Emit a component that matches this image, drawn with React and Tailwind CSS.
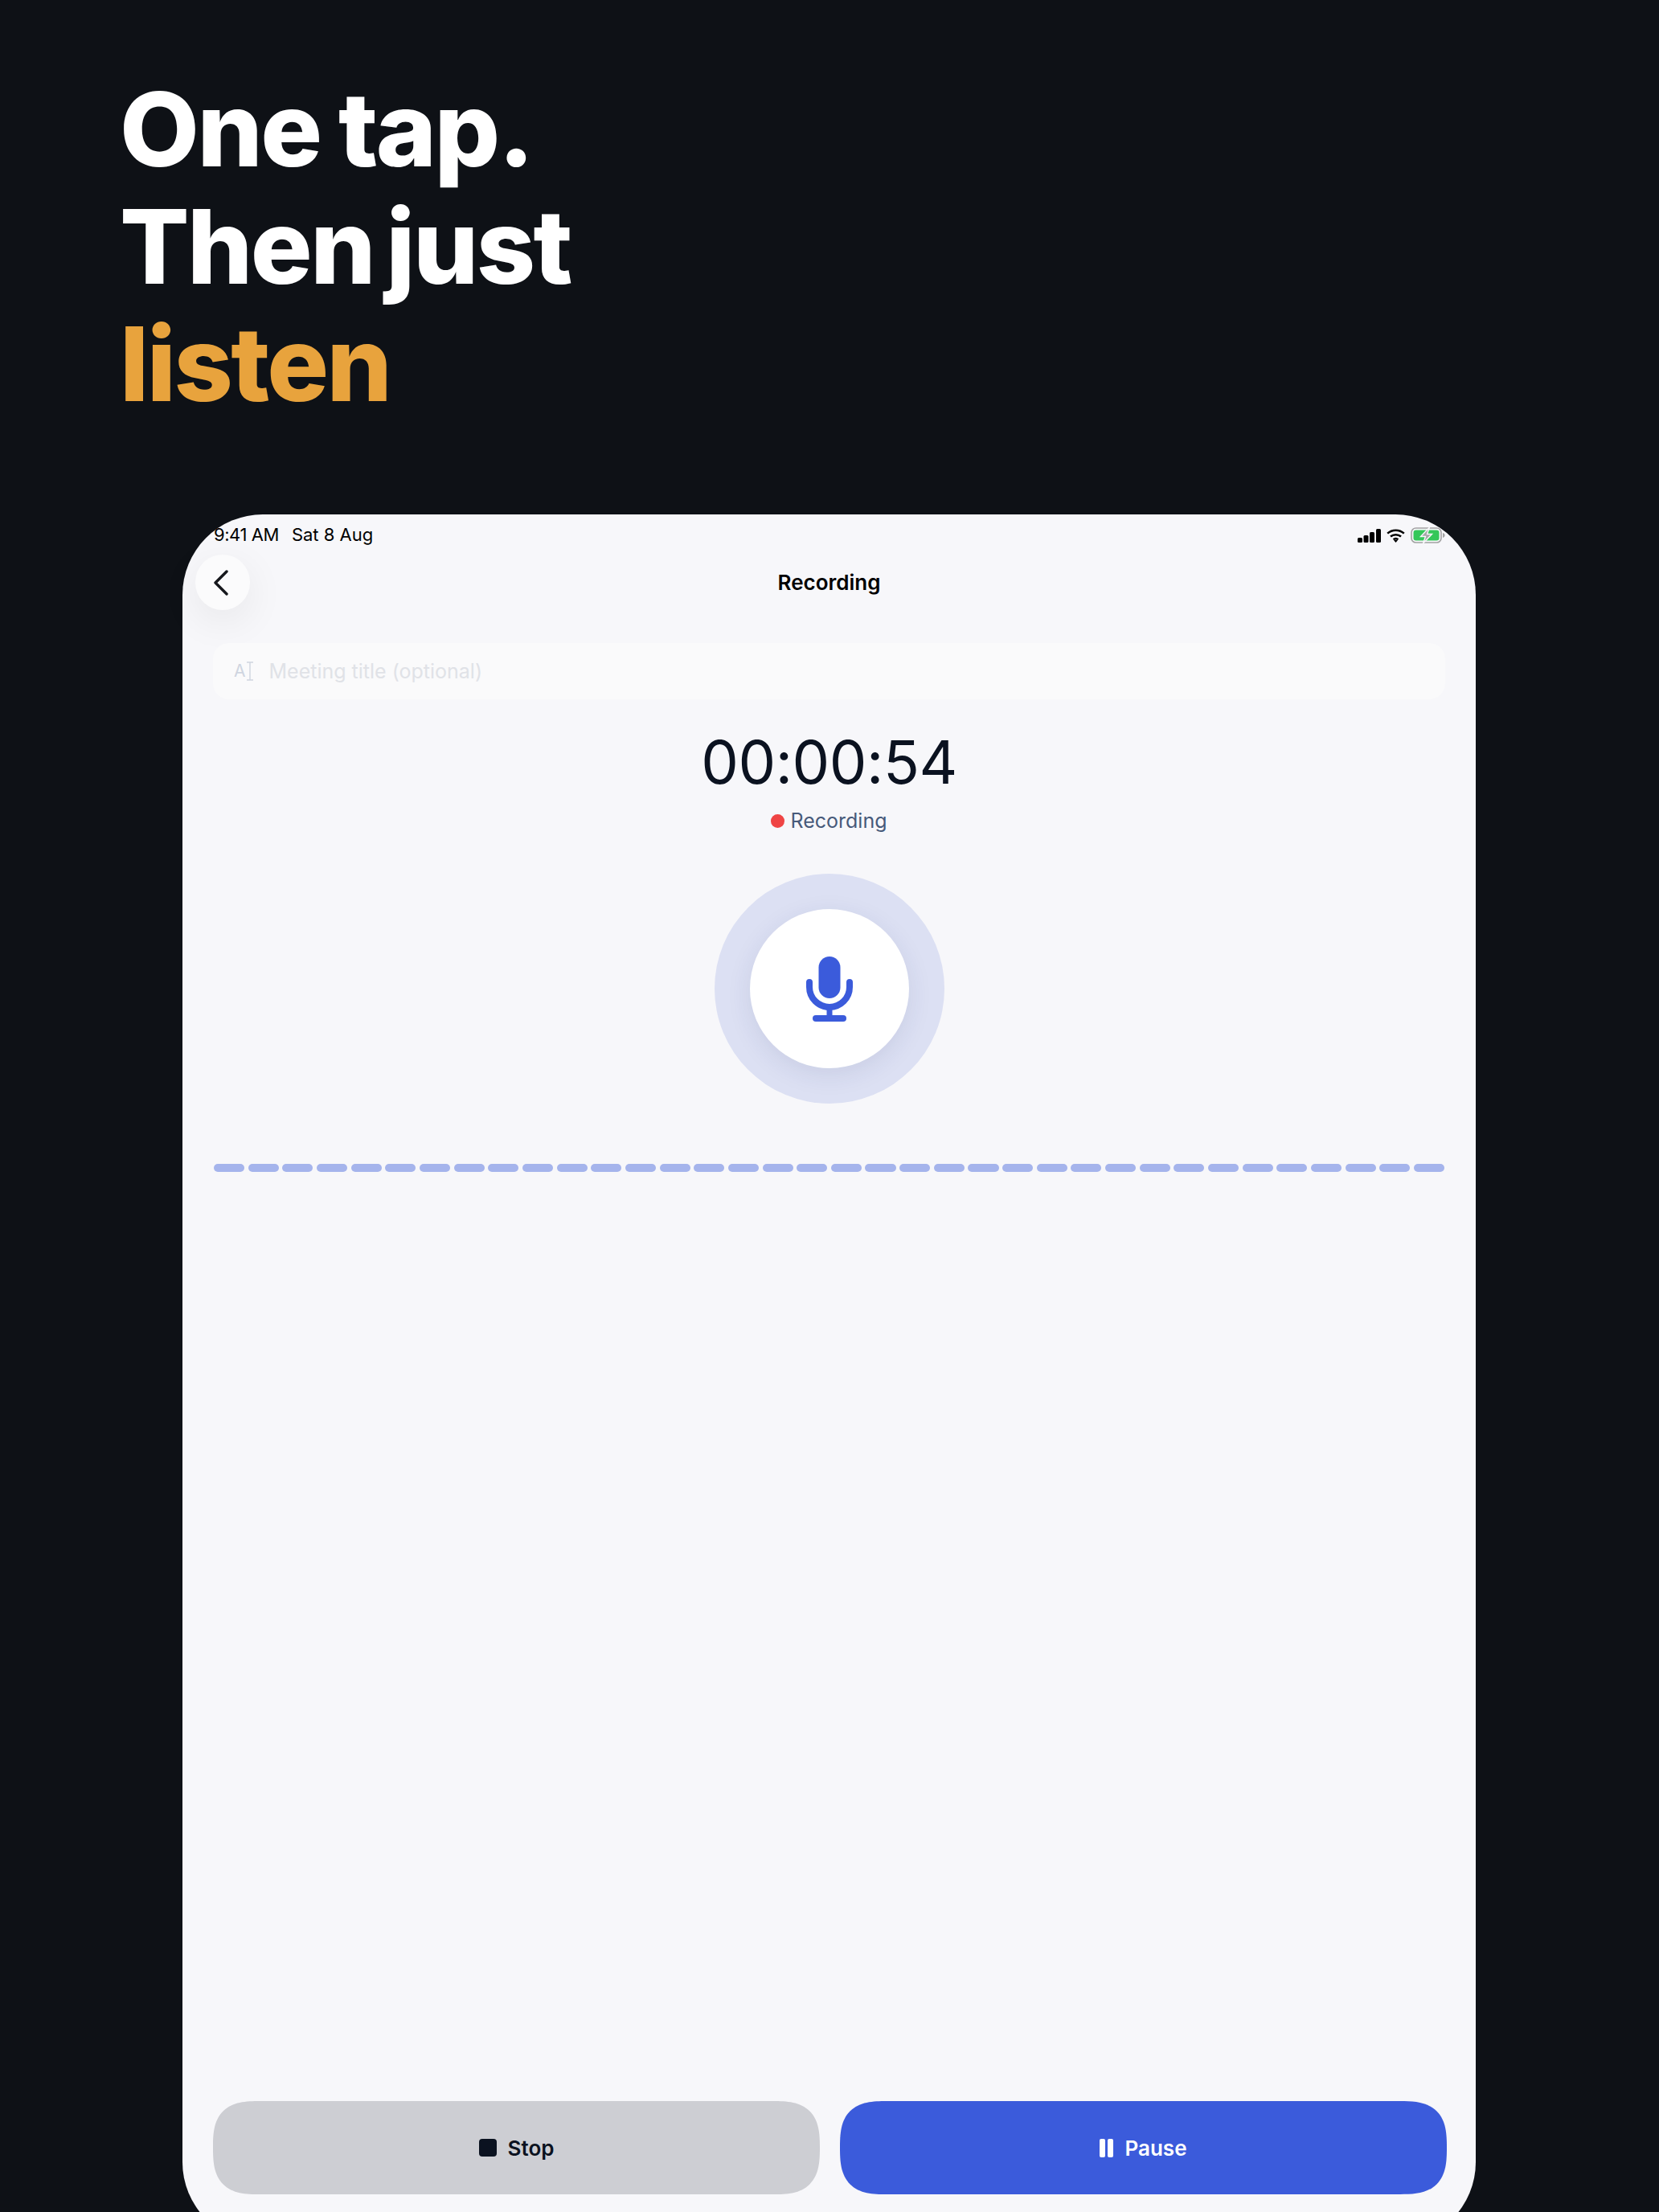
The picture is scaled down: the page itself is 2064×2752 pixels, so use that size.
const font = { fontFamily: "Inter, sans-serif" };

function SignalIcon() {
  return (
    <svg width="29" height="17" viewBox="0 0 29 17" fill="#000">
      <rect x="0" y="11" width="6" height="6" rx="1.5" />
      <rect x="7.5" y="8" width="6" height="9" rx="1.5" />
      <rect x="15" y="4" width="6" height="13" rx="1.5" />
      <rect x="23" y="0" width="6" height="17" rx="1.5" />
    </svg>
  );
}

function WifiIcon() {
  return (
    <svg width="23" height="17" viewBox="0 0 23 17" fill="none" stroke="#000" strokeWidth="2.6">
      <path d="M1.2 5.6C7 .4 16 .4 21.8 5.6" />
      <path d="M5 9.6c3.7-3.2 9.3-3.2 13 0" />
      <path d="M8.6 13.2c1.7-1.4 4.1-1.4 5.8 0" />
      <path d="M11.5 17l-2.4-2.8c1.4-1 3.4-1 4.8 0z" fill="#000" stroke="none" />
    </svg>
  );
}

function BatteryIcon() {
  return (
    <svg width="43" height="20" viewBox="0 0 43 20" fill="none">
      <rect x="1" y="1" width="37" height="18" rx="5.5" stroke="#a3a3a3" strokeWidth="1.6" />
      <rect x="3.5" y="3.5" width="32" height="13" rx="3.2" fill="#34c759" />
      <path d="M40 7c1.6.4 2.6 1.6 2.6 3s-1 2.6-2.6 3z" fill="#a3a3a3" />
      <path d="M23.5 0 12.5 11.5h6L15.5 20l11-11.5h-6z" fill="#a6a6a6" stroke="#f7f7fa" strokeWidth="1.4" />
    </svg>
  );
}

function MicIcon() {
  return (
    <svg width="62" height="84" viewBox="0 0 62 84" fill="none" stroke="#3b5bdb">
      <rect x="17.5" y="2" width="27" height="52" rx="13.5" fill="#3b5bdb" stroke="none" />
      <path d="M6 34v6a25 25 0 0 0 50 0v-6" strokeWidth="8" strokeLinecap="round" />
      <path d="M31 65v14" strokeWidth="7" />
      <path d="M14 79h34" strokeWidth="8" strokeLinecap="round" />
    </svg>
  );
}

export default function App() {
  const bars = Array.from({ length: 36 }, (_, i) => i);

  return (
    <div style={font} className="h-[2752px] w-[2064px] overflow-hidden bg-[#0e1116]">
      {/* Headline */}
      <h1 className="pl-[149px] pt-[88px] text-[128px] font-extrabold leading-[146px] tracking-[-0.02em] text-white">
        <div className="[word-spacing:-3px]">One tap.</div>
        <div className="[word-spacing:-10px]">Then just</div>
        <div className="text-[#e8a33d]">listen</div>
      </h1>

      {/* Device */}
      <div className="ml-[227px] mt-[114px] flex h-[2150px] w-[1609px] flex-col rounded-[100px] bg-[#f7f7fa] px-[38px] pb-[60px]">
        <div className="flex h-[50px] items-start justify-between pt-[10px] text-[22px] leading-[30px] text-black">
          <div className="flex gap-[16px] pl-[1px]">
            <span className="tracking-[-0.02em]">9:41 AM</span>
            <span>Sat 8 Aug</span>
          </div>
          <div className="flex items-center gap-[7px] pt-[6px]">
            <SignalIcon />
            <WifiIcon />
            <BatteryIcon />
          </div>
        </div>

        <div className="-mx-[22px] grid grid-cols-[1fr_auto_1fr] items-center">
          <button className="flex h-[69px] w-[68px] items-center justify-center rounded-full bg-[#fbfbfc] pr-[4px] shadow-[0_14px_50px_rgba(0,0,0,0.07)]">
            <svg width="20" height="32" viewBox="0 0 20 32" fill="none" stroke="#16181d" strokeWidth="3.4" strokeLinecap="round" strokeLinejoin="round">
              <path d="M17 2 3 16l14 14" />
            </svg>
          </button>
          <div className="text-[26px] font-semibold text-black">Recording</div>
          <div />
        </div>

        <div className="mt-[41px] flex h-[70px] items-center rounded-[20px] bg-[#fafafb] pl-[26px]">
          <span className="flex items-center text-[#cfd5e0]">
            <span className="text-[21px]">A</span>
            <svg width="10" height="24" viewBox="0 0 10 24" fill="none" stroke="#cfd5e0" strokeWidth="1.4">
              <path d="M1 1h8M5 1v22M1 23h8" />
            </svg>
          </span>
          <span className="ml-[19px] pt-[2px] text-[25px] text-[#e0e2e7]">Meeting title (optional)</span>
        </div>

        <div className="mt-[32px] text-center text-[74px] font-normal leading-[92px] tracking-[-0.006em] text-[#0b1220]">00:00:54</div>

        <div className="mt-[11px] flex items-center justify-center gap-[7px] text-[25px] leading-[32px] text-[#475a7a]">
          <span className="h-[17px] w-[17px] rounded-full bg-[#ef4444]" />
          Recording
        </div>

        <div className="mt-[50px] flex justify-center">
          <div className="flex h-[286px] w-[286px] items-center justify-center rounded-full bg-[#dce0f3]">
            <div className="flex h-[198px] w-[198px] items-center justify-center rounded-full bg-white shadow-[0_8px_30px_rgba(40,50,110,0.1)]">
              <MicIcon />
            </div>
          </div>
        </div>

        <div className="mt-[75px] flex gap-[4.6px] px-[1px]">
          {bars.map((i) => (
            <div key={i} className="h-[10px] flex-1 rounded-full bg-[#a5b4ec]" />
          ))}
        </div>

        <div className="-mr-[2px] mt-auto flex gap-[25px] text-[26px] font-semibold">
          <button className="flex h-[116px] flex-1 items-center justify-center gap-[14px] rounded-[58px] bg-[#cdced3] text-[#0b1220] [corner-shape:superellipse(1.5)]">
            <span className="h-[22px] w-[22px] rounded-[4px] bg-[#0b1220]" />
            Stop
          </button>
          <button className="flex h-[116px] flex-1 items-center justify-center gap-[14px] rounded-[58px] bg-[#3b5bdb] text-white [corner-shape:superellipse(1.5)]">
            <span className="flex gap-[3px]">
              <span className="h-[23px] w-[7px] rounded-[2px] bg-white" />
              <span className="h-[23px] w-[7px] rounded-[2px] bg-white" />
            </span>
            Pause
          </button>
        </div>
      </div>
    </div>
  );
}
